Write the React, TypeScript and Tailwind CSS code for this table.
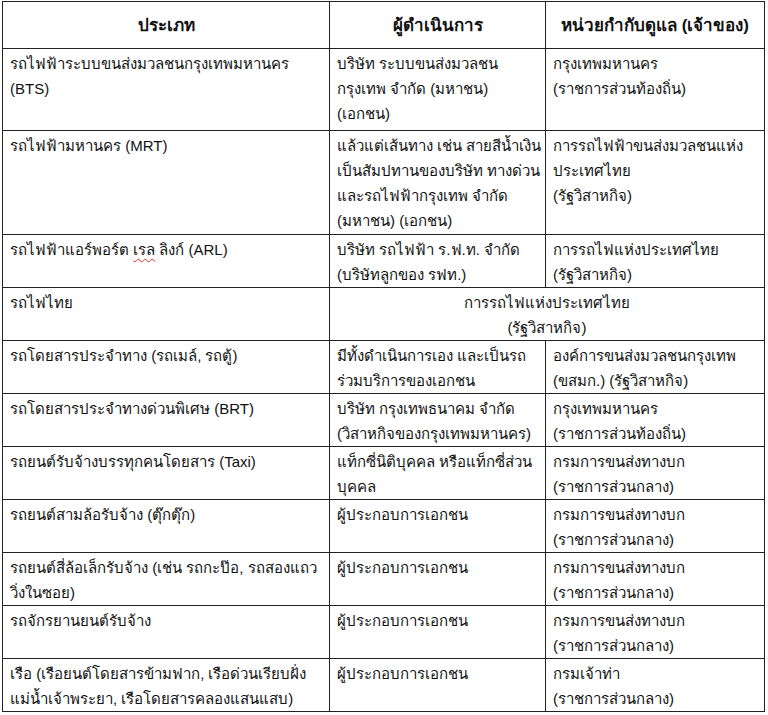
type Row = {
  type: React.ReactNode[]
  op?: string[]
  owner: string[]
  span?: boolean
  h: string
}

const data: Row[] = [
  {
    type: ['รถไฟฟ้าระบบขนส่งมวลชนกรุงเทพมหานคร', '(BTS)'],
    op: ['บริษัท ระบบขนส่งมวลชน', 'กรุงเทพ จำกัด (มหาชน)', '(เอกชน)'],
    owner: ['กรุงเทพมหานคร', '(ราชการส่วนท้องถิ่น)'],
    h: 'h-[82px]',
  },
  {
    type: ['รถไฟฟ้ามหานคร (MRT)'],
    op: ['แล้วแต่เส้นทาง เช่น สายสีน้ำเงิน', 'เป็นสัมปทานของบริษัท ทางด่วน', 'และรถไฟฟ้ากรุงเทพ จำกัด', '(มหาชน) (เอกชน)'],
    owner: ['การรถไฟฟ้าขนส่งมวลชนแห่ง', 'ประเทศไทย', '(รัฐวิสาหกิจ)'],
    h: 'h-[104px]',
  },
  {
    type: [
      <>
        รถไฟฟ้าแอร์พอร์ต{' '}
        <span className="underline decoration-wavy decoration-[#e0301e] decoration-1 underline-offset-[3px]">เรล</span> ลิงก์ (ARL)
      </>,
    ],
    op: ['บริษัท รถไฟฟ้า ร.ฟ.ท. จำกัด', '(บริษัทลูกของ รฟท.)'],
    owner: ['การรถไฟแห่งประเทศไทย', '(รัฐวิสาหกิจ)'],
    h: 'h-[53px]',
  },
  {
    type: ['รถไฟไทย'],
    owner: ['การรถไฟแห่งประเทศไทย', '(รัฐวิสาหกิจ)'],
    span: true,
    h: 'h-[53px]',
  },
  {
    type: ['รถโดยสารประจำทาง (รถเมล์, รถตู้)'],
    op: ['มีทั้งดำเนินการเอง และเป็นรถ', 'ร่วมบริการของเอกชน'],
    owner: ['องค์การขนส่งมวลชนกรุงเทพ', '(ขสมก.) (รัฐวิสาหกิจ)'],
    h: 'h-[53px]',
  },
  {
    type: ['รถโดยสารประจำทางด่วนพิเศษ (BRT)'],
    op: ['บริษัท กรุงเทพธนาคม จำกัด', '(วิสาหกิจของกรุงเทพมหานคร)'],
    owner: ['กรุงเทพมหานคร', '(ราชการส่วนท้องถิ่น)'],
    h: 'h-[53px]',
  },
  {
    type: ['รถยนต์รับจ้างบรรทุกคนโดยสาร (Taxi)'],
    op: ['แท็กซี่นิติบุคคล หรือแท็กซี่ส่วน', 'บุคคล'],
    owner: ['กรมการขนส่งทางบก', '(ราชการส่วนกลาง)'],
    h: 'h-[53px]',
  },
  {
    type: ['รถยนต์สามล้อรับจ้าง (ตุ๊กตุ๊ก)'],
    op: ['ผู้ประกอบการเอกชน'],
    owner: ['กรมการขนส่งทางบก', '(ราชการส่วนกลาง)'],
    h: 'h-[53px]',
  },
  {
    type: ['รถยนต์สี่ล้อเล็กรับจ้าง (เช่น รถกะป๊อ, รถสองแถว', 'วิ่งในซอย)'],
    op: ['ผู้ประกอบการเอกชน'],
    owner: ['กรมการขนส่งทางบก', '(ราชการส่วนกลาง)'],
    h: 'h-[53px]',
  },
  {
    type: ['รถจักรยานยนต์รับจ้าง'],
    op: ['ผู้ประกอบการเอกชน'],
    owner: ['กรมการขนส่งทางบก', '(ราชการส่วนกลาง)'],
    h: 'h-[53px]',
  },
  {
    type: ['เรือ (เรือยนต์โดยสารข้ามฟาก, เรือด่วนเรียบฝั่ง', 'แม่น้ำเจ้าพระยา, เรือโดยสารคลองแสนแสบ)'],
    op: ['ผู้ประกอบการเอกชน'],
    owner: ['กรมเจ้าท่า', '(ราชการส่วนกลาง)'],
    h: 'h-[52px]',
  },
]

const cell = 'border border-[#222] align-top px-[7px] pt-[2px] pb-0'
const head = 'border border-[#222] align-middle text-center font-bold text-[17px]'

function Lines({ items }: { items: React.ReactNode[] }) {
  return (
    <>
      {items.map((t, i) => (
        <div key={i} className="whitespace-nowrap">
          {t}
        </div>
      ))}
    </>
  )
}

export default function App() {
  return (
    <div className="min-h-[715px] w-[768px] bg-white pl-[2px] pt-[1px] font-['Liberation_Sans',sans-serif] text-[15px] leading-[25px] text-[#111]">
      <table className="w-[762px] table-fixed border-collapse">
        <colgroup>
          <col className="w-[327px]" />
          <col className="w-[216px]" />
          <col className="w-[219px]" />
        </colgroup>
        <thead>
          <tr className="h-[47px]">
            <th className={head}>ประเภท</th>
            <th className={head}>ผู้ดำเนินการ</th>
            <th className={head}>หน่วยกำกับดูแล (เจ้าของ)</th>
          </tr>
        </thead>
        <tbody>
          {data.map((r, i) => (
            <tr key={i} className={r.h}>
              <td className={cell}>
                <Lines items={r.type} />
              </td>
              {r.span ? (
                <td colSpan={2} className={cell + ' text-center'}>
                  <Lines items={r.owner} />
                </td>
              ) : (
                <>
                  <td className={cell}>
                    <Lines items={r.op ?? []} />
                  </td>
                  <td className={cell}>
                    <Lines items={r.owner} />
                  </td>
                </>
              )}
            </tr>
          ))}
        </tbody>
      </table>
    </div>
  )
}
